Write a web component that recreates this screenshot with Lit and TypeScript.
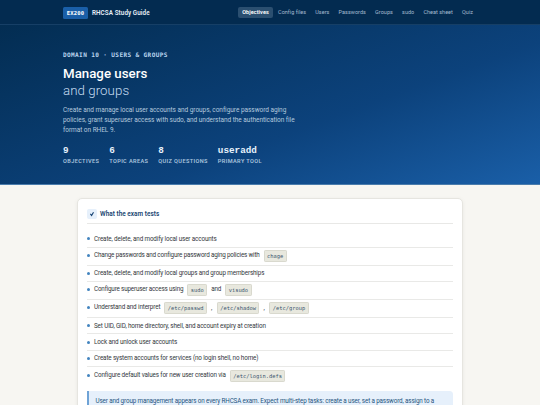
import {LitElement, html, css} from 'lit';
import {customElement} from 'lit/decorators.js';

const NAV = ['Objectives', 'Config files', 'Users', 'Passwords', 'Groups', 'sudo', 'Cheat sheet', 'Quiz'];

const STATS = [
    ['9', 'Objectives'],
    ['6', 'Topic areas'],
    ['8', 'Quiz questions'],
    ['useradd', 'Primary tool'],
];

@customElement('study-nav')
export class StudyNav extends LitElement {
    render() {
        return html`
            <span class="badge">EX200</span>
            <span class="brand">RHCSA Study Guide</span>
            <nav>
                ${NAV.map((n, i) => html`<a class=${i === 0 ? 'active' : ''}>${n}</a>`)}
            </nav>
        `;
    }

    static styles = css`
        :host {
            display: flex;
            align-items: center;
            height: 24px;
            padding: 0 63px;
            background: #032b50;
            border-bottom: 1px solid #163f66;
        }

        .badge {
            width: 25px;
            height: 12px;
            margin-top: 1px;
            text-align: center;
            border-radius: 1.5px;
            background: #1a5fa8;
            color: #fff;
            font: bold 5.5px/12px "DejaVu Sans Mono", monospace;
            letter-spacing: 0.15px;
        }

        .brand {
            margin: 1px 0 0 4px;
            color: #e6eef7;
            font-size: 6.3px;
            font-weight: 600;
            line-height: 12px;
            letter-spacing: 0.08px;
        }

        nav {
            display: flex;
            margin-left: auto;
            gap: 1.2px;
        }

        a {
            padding: 0 4px;
            height: 11px;
            line-height: 11px;
            margin-top: 1px;
            border-radius: 2px;
            color: #a5bbd1;
            font-size: 5.5px;
            letter-spacing: 0.02px;
            white-space: nowrap;
        }

        a.active {
            background: #2b4f70;
            color: #fff;
            font-weight: 600;
            letter-spacing: 0.07px;
        }
    `;
}

@customElement('study-hero')
export class StudyHero extends LitElement {
    render() {
        return html`
            <div class="eyebrow">Domain 10 · Users &amp; Groups</div>
            <h1>Manage users<span>and groups</span></h1>
            <p>
                Create and manage local user accounts and groups, configure password aging<br>
                policies, grant superuser access with sudo, and understand the authentication file<br>
                format on RHEL 9.
            </p>
            <div class="stats">
                ${STATS.map(([value, label]) => html`
                    <div class="stat">
                        <b>${value}</b>
                        <small>${label}</small>
                    </div>
                `)}
            </div>
        `;
    }

    static styles = css`
        :host {
            display: block;
            box-sizing: border-box;
            height: 160px;
            padding: 25px 63px 0;
            background: linear-gradient(160deg, #032d52 0%, #0c427c 60%, #1a5fa8 100%);
            border-bottom: 1px solid #4a7cac;
        }

        .eyebrow {
            color: #b9d4ef;
            font: bold 6.1px/9px "DejaVu Sans Mono", monospace;
            letter-spacing: 0.36px;
            text-transform: uppercase;
        }

        h1 {
            margin: 6px 0 0;
            color: #fff;
            font-size: 13.3px;
            font-weight: 500;
            line-height: 17.3px;
        }

        h1 span {
            display: block;
            color: #c5dbf0;
            font-weight: 300;
            letter-spacing: 0.05px;
        }

        p {
            margin: 5.3px 0 0;
            color: #b4c9de;
            font-size: 6.5px;
            line-height: 10.1px;
            letter-spacing: -0.04px;
            white-space: nowrap;
        }

        .stats {
            display: flex;
            gap: 10px;
            margin-top: 9.4px;
        }

        .stat b {
            display: block;
            color: #e8f2fc;
            font: bold 9.3px/12px "Liberation Mono", monospace;
        }

        .stat small {
            display: block;
            color: #a9c3dd;
            font-size: 5.6px;
            font-weight: 600;
            line-height: 8px;
            letter-spacing: 0.37px;
            text-transform: uppercase;
            white-space: nowrap;
        }
    `;
}

@customElement('exam-card')
export class ExamCard extends LitElement {
    render() {
        return html`
            <header>
                <span class="tick">
                    <svg viewBox="0 0 10 10"><path d="M3.4 4.9 L4.6 6.5 L6.5 3.2" /></svg>
                </span>
                <h2>What the exam tests</h2>
            </header>
            <ul>
                <li>Create, delete, and modify local user accounts</li>
                <li class="tall tight"><span>Change passwords and configure password aging policies with</span> <code>chage</code></li>
                <li>Create, delete, and modify local groups and group memberships</li>
                <li class="tall tight"><span>Configure superuser access using</span> <code>sudo</code> <span>and</span> <code>visudo</code></li>
                <li class="tall"><span>Understand and interpret</span> <code>/etc/passwd</code> <i>,</i> <code>/etc/shadow</code> <i>,</i> <code>/etc/group</code></li>
                <li>Set UID, GID, home directory, shell, and account expiry at creation</li>
                <li>Lock and unlock user accounts</li>
                <li>Create system accounts for services (no login shell, no home)</li>
                <li class="tall"><span>Configure default values for new user creation via</span> <code>/etc/login.defs</code></li>
            </ul>
            <div class="note">User and group management appears on every RHCSA exam. Expect multi-step tasks: create a user, set a password, assign to a</div>
        `;
    }

    static styles = css`
        :host {
            display: block;
            box-sizing: border-box;
            width: 386px;
            height: 240px;
            margin: 13px auto 0;
            padding: 9.5px 9.5px 0 9px;
            background: #fff;
            border: 1px solid #e6e5e0;
            border-radius: 5px;
            box-shadow: 0 1px 4px rgba(0, 0, 0, 0.06);
        }

        header {
            display: flex;
            align-items: center;
            height: 14.5px;
            border-bottom: 1px solid #e8e8e6;
        }

        .tick {
            width: 10px;
            height: 10px;
            margin-top: -4px;
            border-radius: 2px;
            background: #e6f0fb;
        }

        svg {
            display: block;
            width: 10px;
            height: 10px;
            fill: none;
            stroke: #123f70;
            stroke-width: 1.1;
        }

        h2 {
            margin: -3px 0 0 3px;
            color: #174571;
            font-size: 6.4px;
            font-weight: 600;
            letter-spacing: 0.03px;
        }

        ul {
            margin: 7.2px 0 0;
            padding: 0;
            list-style: none;
        }

        li {
            display: flex;
            align-items: center;
            box-sizing: border-box;
            height: 16.4px;
            border-bottom: 1px solid #e9e9e7;
            color: #33383d;
            font-size: 6.3px;
            letter-spacing: -0.13px;
            white-space: nowrap;
        }

        li.tall {
            height: 18px;
        }

        li.tight {
            letter-spacing: -0.18px;
        }

        li:last-child {
            border-bottom: 0;
        }

        li::before {
            content: '';
            width: 3px;
            height: 3px;
            margin-right: 4px;
            border-radius: 50%;
            background: #4384bf;
        }

        li.tall::before,
        li.tall span {
            margin-bottom: 2px;
        }

        code {
            box-sizing: border-box;
            height: 12px;
            margin: 0 4.1px;
            padding: 0 2.4px;
            background: #e8e8de;
            border: 1px solid #d9d9ce;
            border-radius: 1.2px;
            color: #3b566f;
            font: 5.4px/10px "DejaVu Sans Mono", monospace;
            letter-spacing: 0;
        }

        i {
            width: 1.8px;
            font-style: normal;
        }

        .note {
            box-sizing: border-box;
            height: 34px;
            margin-top: 5.5px;
            padding: 5px 14px 0 6.5px;
            background: #e6f0fb;
            border-left: 2px solid #6fa3d6;
            border-radius: 0 3.5px 3.5px 0;
            color: #255580;
            font-size: 6.3px;
            line-height: 10px;
            letter-spacing: -0.14px;
            white-space: nowrap;
        }
    `;
}

@customElement('app-root')
export class AppRoot extends LitElement {
    render() {
        return html`
            <study-nav></study-nav>
            <study-hero></study-hero>
            <exam-card></exam-card>
        `;
    }

    static styles = css`
        :host {
            display: block;
            height: 405px;
            overflow: hidden;
            background: #f7f6f2;
            font-family: Roboto, "Liberation Sans", sans-serif;
        }
    `;
}
